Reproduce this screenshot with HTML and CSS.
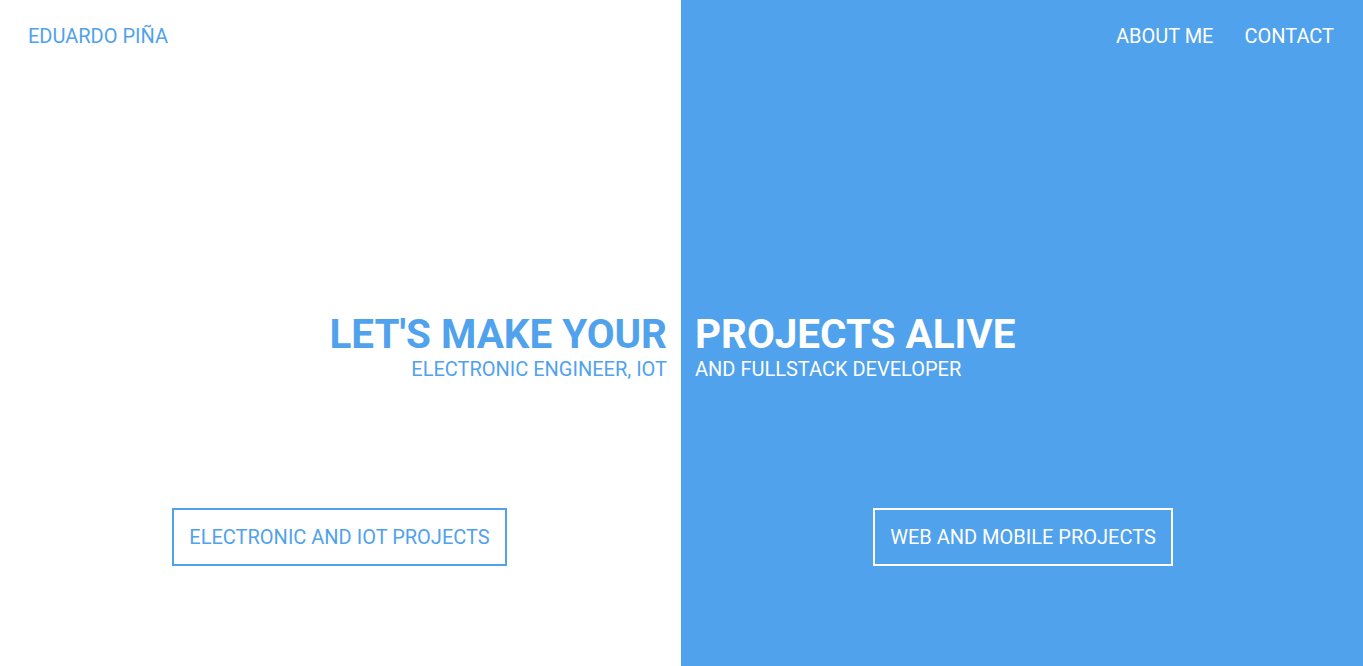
FILE: index.html
```html
<!DOCTYPE html>
<html lang="es">
<head>
<meta charset="utf-8">
<title>Eduardo Piña</title>
<link rel="stylesheet" href="styles.css">
</head>
<body>
<div class="page">
  <section class="half half-left">
    <header class="top">
      <a class="brand" href="#">EDUARDO PIÑA</a>
    </header>
    <div class="hero hero-left">
      <h1 class="title">LET'S MAKE YOUR</h1>
      <p class="sub">ELECTRONIC ENGINEER, IOT</p>
    </div>
    <div class="cta">
      <a class="btn btn-left" href="#">ELECTRONIC AND IOT PROJECTS</a>
    </div>
  </section>
  <section class="half half-right">
    <header class="top top-right">
      <nav class="nav">
        <a href="#">ABOUT ME</a>
        <a href="#">CONTACT</a>
      </nav>
    </header>
    <div class="hero hero-right">
      <h1 class="title">PROJECTS ALIVE</h1>
      <p class="sub">AND FULLSTACK DEVELOPER</p>
    </div>
    <div class="cta">
      <a class="btn btn-right" href="#">WEB AND MOBILE PROJECTS</a>
    </div>
  </section>
</div>
</body>
</html>
```
FILE: styles.css
```css
* { box-sizing: border-box; }
html, body { margin: 0; padding: 0; }
body {
  font-family: Roboto, "Liberation Sans", sans-serif;
  overflow: hidden;
}
a { text-decoration: none; color: inherit; }
.page {
  display: grid;
  grid-template-columns: 681px 1fr;
  height: 666px;
}
.half {
  display: flex;
  flex-direction: column;
  height: 666px;
}
.half-left { background: #ffffff; color: #50a2ec; }
.half-right { background: #50a2ec; color: #ffffff; }
.top {
  display: flex;
  padding: 25px 28px 0;
  height: 48px;
  font-size: 20px;
  line-height: 23px;
}
.top-right { justify-content: flex-end; padding-right: 29px; }
.nav { display: flex; gap: 31px; }
.hero {
  margin-top: 263px;
  display: flex;
  flex-direction: column;
}
.hero-left { align-items: flex-end; padding-right: 14px; }
.hero-right { align-items: flex-start; padding-left: 14px; }
.title {
  margin: 0;
  font-size: 40.4px;
  font-weight: 700;
  line-height: 47px;
}
.sub {
  margin: 0;
  font-size: 20px;
  line-height: 23px;
}
.cta {
  margin-top: 127px;
  display: flex;
  justify-content: center;
}
.btn {
  display: inline-block;
  font-size: 20px;
  line-height: 23px;
  padding: 16px 15px 15px;
  border: 2px solid currentColor;
}
.btn-left { margin-right: 2px; }
.btn-right { margin-left: 2px; }
```
